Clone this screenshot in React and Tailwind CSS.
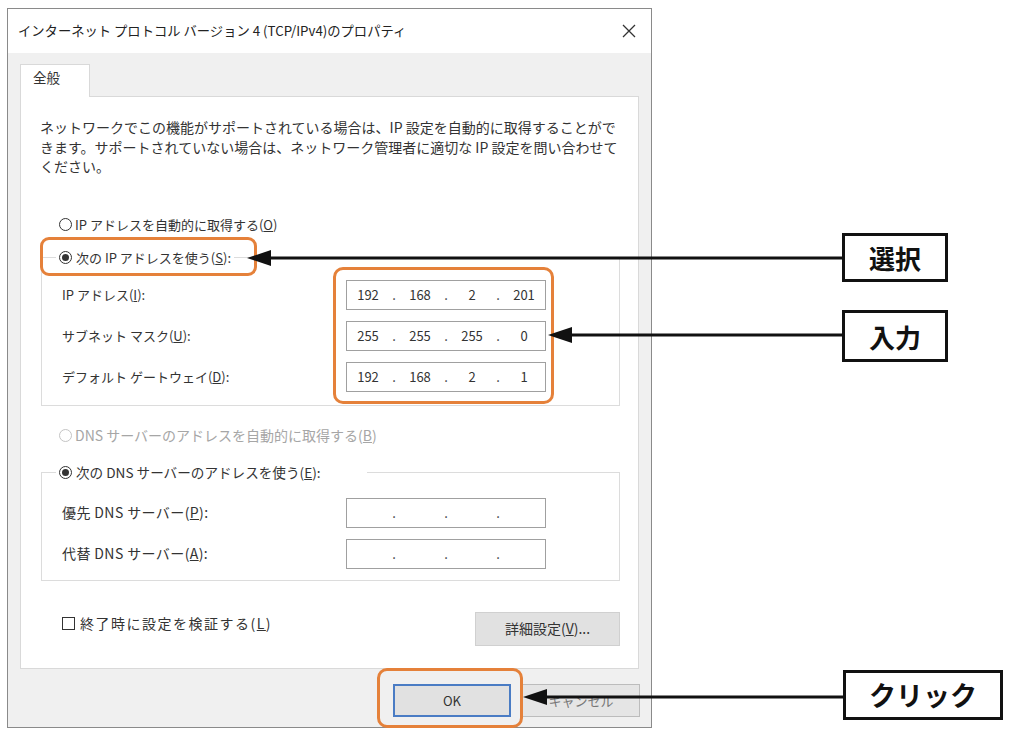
import React from 'react';

const Accel = ({ k }) => <span className="underline">{k}</span>;

const Radio = ({ checked, disabled }) => (
  <span
    className={`inline-flex items-center justify-center w-[13px] h-[13px] rounded-full border bg-white shrink-0 ${
      disabled ? 'border-[#c4c4c4]' : 'border-[#333]'
    }`}
  >
    {checked && <span className="w-[7px] h-[7px] rounded-full bg-[#333]" />}
  </span>
);

const IpField = ({ parts }) => (
  <div className="w-[200px] h-[30px] border border-[#a0a0a0] bg-white flex items-center pl-[3px] text-[13px] text-[#333]">
    {[0, 1, 2, 3].map((i) => (
      <React.Fragment key={i}>
        <span className="w-[36px] text-center">{parts ? parts[i] : ''}</span>
        {i < 3 && <span className="w-[16px] text-center">.</span>}
      </React.Fragment>
    ))}
  </div>
);

const FieldRow = ({ label, parts, labelClass = 'text-[13px]' }) => (
  <div className="flex items-center h-[30px]">
    <span className={`w-[304px] pl-[20px] text-[#333] ${labelClass}`}>{label}</span>
    <IpField parts={parts} />
  </div>
);

const Group = ({ legend, children, className, legendClass = '' }) => (
  <fieldset className={`ml-[20px] w-[579px] border border-[#dcdcdc] ${className}`}>
    <legend
      className={`ml-[14px] pl-[3px] h-[20px] flex items-center gap-[4px] text-[#333] bg-white ${legendClass}`}
    >
      {legend}
    </legend>
    {children}
  </fieldset>
);

const Callout = ({ className, children }) => (
  <div
    className={`absolute border-[3px] border-[#111] bg-white flex items-center justify-center font-bold text-[#111] ${className}`}
  >
    {children}
  </div>
);

export default function App() {
  return (
    <div className="relative w-[1012px] h-[732px] bg-white overflow-hidden font-['Noto_Sans_CJK_JP',sans-serif]">
      <div className="ml-[7px] mt-[8px] w-[645px] h-[720px] border border-[#8a8a8a] bg-[#f0f0f0] flex flex-col">
        {/* title bar */}
        <div className="h-[44px] bg-white flex items-center justify-between pl-[10px] pr-[15px]">
          <span className="text-[13.3px] text-[#222]">
            インターネット プロトコル バージョン 4 (TCP/IPv4)のプロパティ
          </span>
          <svg width="14" height="14" viewBox="0 0 14 14">
            <path d="M1 1 L13 13 M13 1 L1 13" stroke="#333" strokeWidth="1.3" />
          </svg>
        </div>

        <div className="px-[12px] pt-[11px]">
          <div className="relative z-10 -mb-px w-[70px] h-[33px] bg-white border border-b-0 border-[#d9d9d9] pl-[12px] pt-[2px] text-[13.5px] text-[#333]">
            全般
          </div>

          {/* tab page */}
          <div className="h-[573px] bg-white border border-[#d9d9d9]">
            <p className="pl-[19px] pt-[21px] text-[14px] leading-[19.5px] text-[#333] whitespace-nowrap">
              ネットワークでこの機能がサポートされている場合は、IP 設定を自動的に取得することがで
              <br />
              きます。サポートされていない場合は、ネットワーク管理者に適切な IP 設定を問い合わせて
              <br />
              ください。
            </p>

            <div className="mt-[38px] ml-[38px] h-[20px] flex items-center gap-[3px] text-[13px] text-[#333]">
              <Radio />
              <span>
                IP アドレスを自動的に取得する(<Accel k="O" />)
              </span>
            </div>

            <Group
              className="mt-[13px] pt-[12px] pb-[13px]"
              legendClass="pr-[3px] text-[13px]"
              legend={
                <>
                  <Radio checked />
                  <span>
                    次の IP アドレスを使う(<Accel k="S" />):
                  </span>
                </>
              }
            >
              <div className="flex flex-col gap-[11px]">
                <FieldRow
                  label={<>IP アドレス(<Accel k="I" />):</>}
                  parts={['192', '168', '2', '201']}
                />
                <FieldRow
                  label={<>サブネット マスク(<Accel k="U" />):</>}
                  parts={['255', '255', '255', '0']}
                />
                <FieldRow
                  label={<>デフォルト ゲートウェイ(<Accel k="D" />):</>}
                  parts={['192', '168', '2', '1']}
                />
              </div>
            </Group>

            <div className="mt-[20px] ml-[38px] h-[20px] flex items-center gap-[3px] text-[14px] text-[#a6a6a6]">
              <Radio disabled />
              <span>
                DNS サーバーのアドレスを自動的に取得する(<Accel k="B" />)
              </span>
            </div>

            <Group
              className="mt-[17px] pt-[15px] pb-[11px]"
              legendClass="pr-[46px] text-[13.6px]"
              legend={
                <>
                  <Radio checked />
                  <span>
                    次の DNS サーバーのアドレスを使う(<Accel k="E" />):
                  </span>
                </>
              }
            >
              <div className="flex flex-col gap-[11px]">
                <FieldRow
                  labelClass="text-[14px] tracking-[0.4px]"
                  label={<>優先 DNS サーバー(<Accel k="P" />):</>}
                />
                <FieldRow
                  labelClass="text-[14px] tracking-[0.4px]"
                  label={<>代替 DNS サーバー(<Accel k="A" />):</>}
                />
              </div>
            </Group>

            <div className="mt-[31px] ml-[20px] w-[579px] flex items-start justify-between">
              <div className="mt-[2px] pl-[21px] h-[20px] flex items-center gap-[5px] text-[14px] tracking-[1.5px] text-[#333]">
                <span className="w-[13px] h-[13px] border border-[#333] bg-white" />
                <span>
                  終了時に設定を検証する(<Accel k="L" />)
                </span>
              </div>
              <button className="w-[145px] h-[34px] bg-[#e1e1e1] border border-[#d0d0d0] text-[14px] text-[#333]">
                詳細設定(<Accel k="V" />)...
              </button>
            </div>
          </div>
        </div>

        <div className="mt-[15px] pr-[11px] flex justify-end gap-[11px]">
          <button className="w-[118px] h-[33px] bg-[#e1e1e1] border-2 border-[#4a7cc4] text-[13px] text-[#333]">
            OK
          </button>
          <button className="w-[118px] h-[33px] bg-[#e5e5e5] border border-[#bcbcbc] text-[13px] text-[#777]">
            キャンセル
          </button>
        </div>
      </div>

      {/* highlight frames */}
      <div className="absolute left-[40px] top-[237px] w-[217px] h-[39px] border-[3px] border-[#e5813a] rounded-[9px]" />
      <div className="absolute left-[333px] top-[267px] w-[221px] h-[137px] border-[3px] border-[#e5813a] rounded-[10px]" />
      <div className="absolute left-[377px] top-[668px] w-[146px] h-[60px] border-[3px] border-[#e5813a] rounded-[10px]" />

      {/* pointer arrows */}
      <svg className="absolute inset-0" width="1012" height="732" viewBox="0 0 1012 732">
        <g fill="#111" stroke="#111" strokeWidth="3">
          <line x1="843" y1="258" x2="268" y2="258" />
          <polygon points="247,258 271,250 271,266" stroke="none" />
          <line x1="843" y1="335" x2="568" y2="335" />
          <polygon points="548,335 572,327 572,343" stroke="none" />
          <line x1="844" y1="697" x2="544" y2="697" />
          <polygon points="523,697 547,689 547,705" stroke="none" />
        </g>
      </svg>

      <Callout className="left-[842px] top-[233px] w-[106px] h-[49px] text-[26px]">選択</Callout>
      <Callout className="left-[842px] top-[310px] w-[106px] h-[52px] text-[26px]">入力</Callout>
      <Callout className="left-[843px] top-[670px] w-[160px] h-[50px] text-[27px]">クリック</Callout>
    </div>
  );
}
